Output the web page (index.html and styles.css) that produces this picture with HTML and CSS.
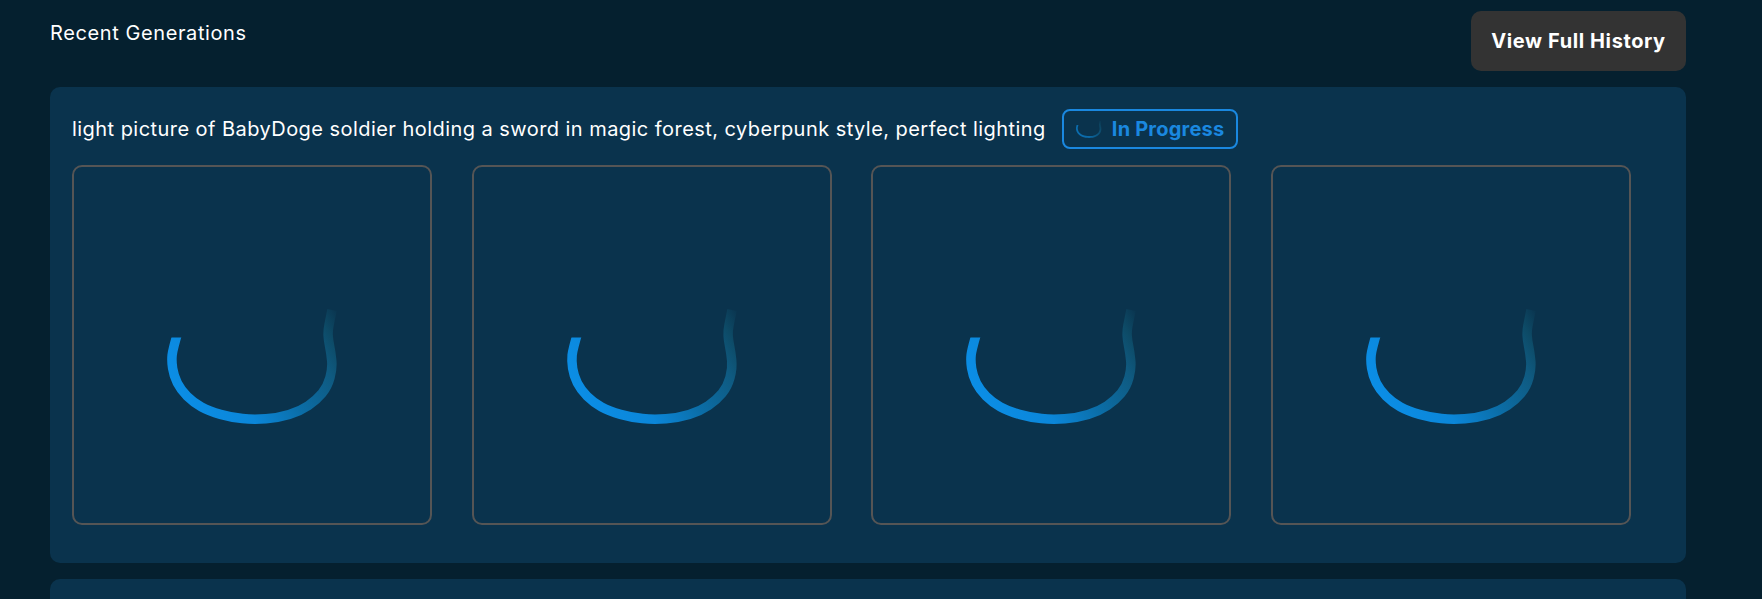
FILE: index.html
```html
<!DOCTYPE html>
<html lang="en">
<head>
<meta charset="utf-8">
<title>Recent Generations</title>
<link rel="stylesheet" href="styles.css">
</head>
<body>
<main class="page">
  <header class="head">
    <h2 class="title">Recent Generations</h2>
    <button class="history">View Full History</button>
  </header>
  <section class="card">
    <div class="prompt-row">
      <p class="prompt">light picture of BabyDoge soldier holding a sword in magic forest, cyberpunk style, perfect lighting</p>
      <span class="badge">
        <svg class="mini" viewBox="94 140 176 120" aria-hidden="true">
          <defs>
            <linearGradient id="spin" gradientUnits="userSpaceOnUse" x1="100" y1="235" x2="268" y2="140">
              <stop offset="0" stop-color="#0b8fe8"/>
              <stop offset=".32" stop-color="#0b86d8"/>
              <stop offset=".55" stop-color="#0b6ea8"/>
              <stop offset=".78" stop-color="#0f5a80"/>
              <stop offset=".88" stop-color="#0d4a66"/>
              <stop offset=".98" stop-color="#0d4a66" stop-opacity="0"/>
            </linearGradient>
            <clipPath id="cut"><path d="M0 172.5H180V0H360V360H0Z"/></clipPath>
          </defs>
          <path class="arc arc-mini" d="M106.2 166Q100.8 184.2 100.15 190Q99.5 195.9 100.65 203.4Q101.8 210.9 105.35 218Q108.9 225 115.15 231.25Q121.4 237.5 129.3 241.85Q137.2 246.2 148.45 249.35Q159.7 252.5 170.5 253.6Q181.3 254.7 193.85 253.8Q206.4 252.9 217.2 249.55Q228 246.2 236.35 240.6Q244.7 235 250.1 228.35Q255.5 221.7 258 212.5Q260.5 203.3 259.7 195.4Q258.9 187.5 257.65 181.25Q256.4 175 256.15 170.45Q255.9 165.9 256.95 160.45Q258 155 260 145"/>
        </svg>
        In Progress
      </span>
    </div>
    <div class="grid">
      <div class="tile"><svg class="spinner" viewBox="2 2 356 356" aria-hidden="true"><path class="arc" d="M106.2 166Q100.8 184.2 100.15 190Q99.5 195.9 100.65 203.4Q101.8 210.9 105.35 218Q108.9 225 115.15 231.25Q121.4 237.5 129.3 241.85Q137.2 246.2 148.45 249.35Q159.7 252.5 170.5 253.6Q181.3 254.7 193.85 253.8Q206.4 252.9 217.2 249.55Q228 246.2 236.35 240.6Q244.7 235 250.1 228.35Q255.5 221.7 258 212.5Q260.5 203.3 259.7 195.4Q258.9 187.5 257.65 181.25Q256.4 175 256.15 170.45Q255.9 165.9 256.95 160.45Q258 155 260 145"/></svg></div>
      <div class="tile"><svg class="spinner" viewBox="2 2 356 356" aria-hidden="true"><path class="arc" d="M106.2 166Q100.8 184.2 100.15 190Q99.5 195.9 100.65 203.4Q101.8 210.9 105.35 218Q108.9 225 115.15 231.25Q121.4 237.5 129.3 241.85Q137.2 246.2 148.45 249.35Q159.7 252.5 170.5 253.6Q181.3 254.7 193.85 253.8Q206.4 252.9 217.2 249.55Q228 246.2 236.35 240.6Q244.7 235 250.1 228.35Q255.5 221.7 258 212.5Q260.5 203.3 259.7 195.4Q258.9 187.5 257.65 181.25Q256.4 175 256.15 170.45Q255.9 165.9 256.95 160.45Q258 155 260 145"/></svg></div>
      <div class="tile"><svg class="spinner" viewBox="2 2 356 356" aria-hidden="true"><path class="arc" d="M106.2 166Q100.8 184.2 100.15 190Q99.5 195.9 100.65 203.4Q101.8 210.9 105.35 218Q108.9 225 115.15 231.25Q121.4 237.5 129.3 241.85Q137.2 246.2 148.45 249.35Q159.7 252.5 170.5 253.6Q181.3 254.7 193.85 253.8Q206.4 252.9 217.2 249.55Q228 246.2 236.35 240.6Q244.7 235 250.1 228.35Q255.5 221.7 258 212.5Q260.5 203.3 259.7 195.4Q258.9 187.5 257.65 181.25Q256.4 175 256.15 170.45Q255.9 165.9 256.95 160.45Q258 155 260 145"/></svg></div>
      <div class="tile"><svg class="spinner" viewBox="2 2 356 356" aria-hidden="true"><path class="arc" d="M106.2 166Q100.8 184.2 100.15 190Q99.5 195.9 100.65 203.4Q101.8 210.9 105.35 218Q108.9 225 115.15 231.25Q121.4 237.5 129.3 241.85Q137.2 246.2 148.45 249.35Q159.7 252.5 170.5 253.6Q181.3 254.7 193.85 253.8Q206.4 252.9 217.2 249.55Q228 246.2 236.35 240.6Q244.7 235 250.1 228.35Q255.5 221.7 258 212.5Q260.5 203.3 259.7 195.4Q258.9 187.5 257.65 181.25Q256.4 175 256.15 170.45Q255.9 165.9 256.95 160.45Q258 155 260 145"/></svg></div>
    </div>
  </section>
  <section class="card card-next"></section>
</main>
</body>
</html>
```
FILE: styles.css
```css
* { box-sizing: border-box; }
html, body { margin: 0; height: 100%; overflow: hidden; }
body {
  background: #05202f;
  color: #fff;
  font-family: Inter, "Open Sans", sans-serif;
}
.page { padding: 11px 76px 0 50px; }
.head { display: flex; justify-content: space-between; align-items: flex-start; height: 76px; }
.title { margin: 10px 0 0; font-size: 20px; line-height: 24px; font-weight: 400; letter-spacing: .6px; }
.history {
  width: 215px; height: 60px;
  border: 0; border-radius: 10px;
  background: #333;
  color: #fff;
  font: 700 20px/1 Inter, "Open Sans", sans-serif;
  letter-spacing: .6px;
}
.card { background: #0a334d; border-radius: 10px; padding: 22px 22px 38px; height: 476px; }
.card-next { margin-top: 16px; height: 200px; }
.prompt-row { display: flex; align-items: center; gap: 16px; height: 40px; }
.prompt { margin: 0; font-size: 20px; line-height: 28px; white-space: nowrap; letter-spacing: .45px; }
.badge {
  display: flex; align-items: center; gap: 10px;
  width: 176px; height: 40px; padding-left: 12px;
  border: 2px solid #1a88e0; border-radius: 8px;
  color: #1a88e0;
  font-size: 20px; font-weight: 700; white-space: nowrap; letter-spacing: .2px;
}
.mini { width: 26px; height: 18px; flex: none; }
.grid { display: flex; gap: 39.67px; margin-top: 16px; }
.tile { width: 360px; height: 360px; border: 2px solid #555; border-radius: 10px; }
.spinner { display: block; width: 100%; height: 100%; }
.arc { fill: none; stroke: url(#spin); stroke-width: 9.5; clip-path: url(#cut); }
.arc-mini { stroke-width: 12; opacity: .65; }
```
